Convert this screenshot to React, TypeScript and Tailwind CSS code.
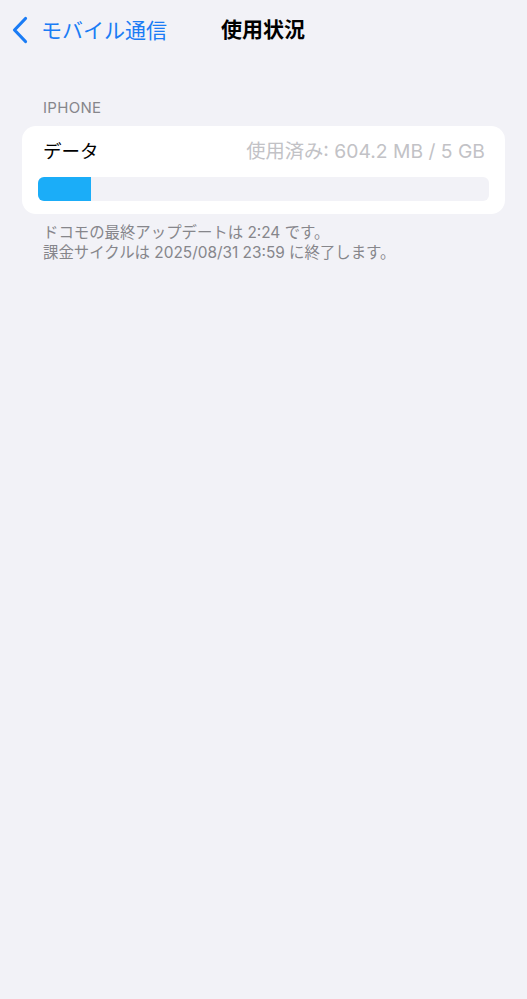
export default function App() {
  const used = 604.2;
  const total = 5 * 1024;
  const pct = Math.max((used / total) * 100, 11.75);

  return (
    <div
      className="min-h-[999px] w-full bg-[#f2f2f7]"
      style={{ fontFamily: 'Inter, "Noto Sans CJK JP", sans-serif' }}
    >
      {/* Nav bar */}
      <div className="relative flex h-[60px] items-center">
        <button className="flex items-center pl-[10px] text-[#1a7cf5]">
          <svg width="20" height="28" viewBox="0 0 20 28" fill="none">
            <path
              d="M15.5 2.5 L4.5 14 L15.5 25.5"
              stroke="currentColor"
              strokeWidth="3.2"
              strokeLinecap="round"
              strokeLinejoin="round"
            />
          </svg>
          <span className="ml-[11px] text-[21px] leading-none">モバイル通信</span>
        </button>
        <h1 className="absolute left-[221px] top-[17px] text-[21px] font-bold leading-[26px] text-black">
          使用状況
        </h1>
      </div>

      {/* Section */}
      <div className="px-[22px] pt-[38px]">
        <p className="pl-[21px] text-[15px] leading-[20px] tracking-[0.3px] text-[#86868b]">IPHONE</p>
        <div className="mt-[8px] rounded-[14px] bg-white px-[16px] pb-[13px] pt-[12px]">
          <div className="flex items-center justify-between pl-[5px] pr-[4px]">
            <span className="text-[18.5px] leading-[26px] text-black">データ</span>
            <span className="text-[19.3px] leading-[26px] text-[#c2c2c6]">使用済み: 604.2 MB / 5 GB</span>
          </div>
          <div className="mt-[13px] h-[24px] overflow-hidden rounded-[6px] bg-[#f2f2f7]">
            <div className="h-full bg-[#1badf8]" style={{ width: `${pct}%` }} />
          </div>
        </div>
        <div className="mt-[9px] pl-[21px] text-[15.4px] leading-[20px] text-[#86868b]">
          <p>ドコモの最終アップデートは 2:24 です。</p>
          <p>課金サイクルは 2025/08/31 23:59 に終了します。</p>
        </div>
      </div>
    </div>
  );
}
